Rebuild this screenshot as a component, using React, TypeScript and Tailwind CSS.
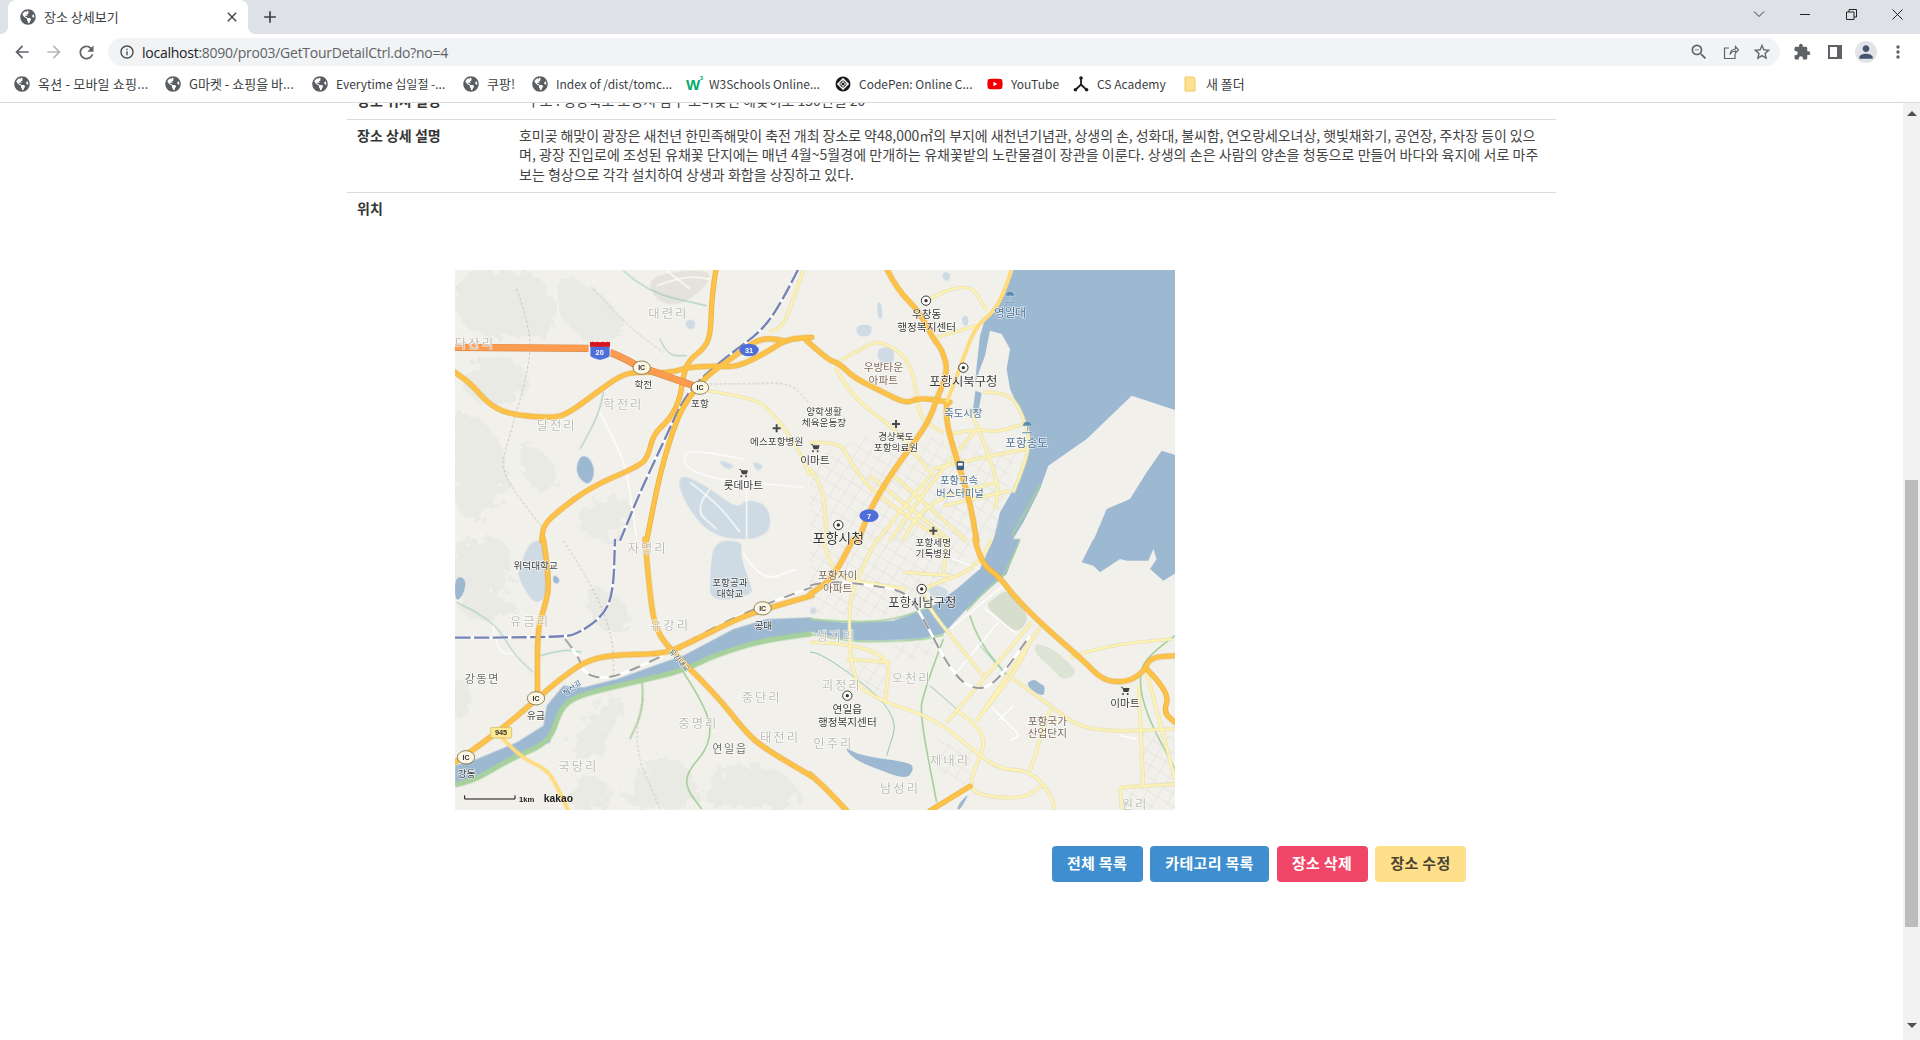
import { FaGlobeAmericas, FaYoutube } from 'react-icons/fa';
import {
  MdAdd,
  MdArrowBack,
  MdArrowForward,
  MdClose,
  MdExtension,
  MdInfoOutline,
  MdMoreVert,
  MdPerson,
  MdRefresh,
  MdStarBorder,
  MdZoomOut,
} from 'react-icons/md';

const KR = "font-['Noto_Sans_CJK_KR','Noto_Sans',sans-serif]";

// Map data is written in 3x pixels, one origin for each quarter of the map
const tiles = [
  [-15, -3],
  [1065, -3],
  [-15, 807],
  [1065, 807],
];
type Line = [number, string];
type Area = [number, string, string];

const move = (tile: number) => `translate(${tiles[tile][0]} ${tiles[tile][1]})`;
const parse = (pts: string) => pts.split(' ').map((p) => p.split(',').map(Number));

const curve = (pts: string) => {
  const p = parse(pts);
  let d = `M${p[0][0]} ${p[0][1]}`;
  for (let i = 1; i < p.length - 1; i++) {
    d += ` Q${p[i][0]} ${p[i][1]} ${(p[i][0] + p[i + 1][0]) / 2} ${(p[i][1] + p[i + 1][1]) / 2}`;
  }
  const last = p[p.length - 1];
  return `${d} L${last[0]} ${last[1]}`;
};

const blob = (pts: string) => {
  const p = parse(pts);
  const mid = (a: number[], b: number[]) => `${(a[0] + b[0]) / 2} ${(a[1] + b[1]) / 2}`;
  let d = `M${mid(p[p.length - 1], p[0])}`;
  p.forEach((pt, i) => {
    d += ` Q${pt[0]} ${pt[1]} ${mid(pt, p[(i + 1) % p.length])}`;
  });
  return `${d} Z`;
};

const campus = '#cfdbe4';
const water = '#9db9d2';
const park = '#d8decd';

const hills: Line[] = [
  [0, '0,20 120,0 250,0 320,90 300,210 180,200 40,200'],
  [0, '60,280 210,260 240,380 130,420 30,370'],
  [0, '0,420 110,450 190,600 130,730 30,760 0,600'],
  [0, '300,20 430,40 540,170 460,250 340,170'],
  [0, '200,500 300,560 330,640 230,680'],
  [0, '400,700 560,680 520,810 380,810'],
  [2, '0,0 180,0 190,100 130,190 0,180'],
  [2, '20,190 140,170 220,200 150,250 40,230'],
  [2, '400,140 510,170 550,240 500,290 430,260'],
  [2, '360,600 440,500 530,460 480,580 430,670 370,660'],
  [2, '500,810 560,710 630,640 730,690 750,810'],
  [2, '770,720 860,670 1000,690 1085,810 750,810'],
  [2, '0,420 70,430 60,520 0,540'],
  [2, '370,720 480,720 480,810 350,810'],
];

const softAreas: Area[] = [
  [0, '590,30 680,5 790,5 760,60 690,110 620,100', '#e4e2da'],
  [0, '680,610 770,650 860,720 890,690 960,710 960,810 790,810 700,700', campus],
  [0, '800,570 860,590 830,605', campus],
  [0, '905,575 945,590 920,610', campus],
  [0, '390,555 425,570 435,620 412,652 375,612', water],
  [0, '705,155 735,150 735,180 710,180', campus],
  [1, '200,100 215,100 218,150 205,150', campus],
  [1, '135,170 185,165 185,200 145,205', campus],
  [1, '200,235 255,235 250,290 205,280', campus],
  [1, '395,10 420,10 420,35 400,35', campus],
  [1, '455,140 475,140 475,170 458,170', campus],
  [2, '205,90 240,5 280,5 310,130 260,210 205,120', campus],
  [2, '15,110 50,120 40,170 15,190', water],
  [2, '310,105 330,120 325,135 308,130', water],
  [2, '790,5 880,5 870,50 900,130 910,170 780,190 780,110', campus],
  [3, '100,620 150,650 300,670 312,690 290,722 200,690 130,660', water],
  [3, '650,430 675,420 690,435 705,440 702,475 660,450', water],
  [3, '525,200 555,175 590,150 625,190 660,240 620,285 570,240', park],
  [3, '670,310 730,330 770,365 805,400 760,428 720,380 680,350', '#dde3d5'],
  [3, '350,130 420,150 405,180 360,175', campus],
  [3, '0,205 20,205 20,225 0,225', campus],
  [3, '450,790 480,760 450,813 440,810', water],
];

const seas: Area[] = [
  [1, '612,0 1100,0 1100,425 965,380 830,510 715,590 690,660 640,760 606,815 550,815 570,730 605,670 650,560 660,490 600,360 590,300 600,240 575,195 540,185 525,260 510,300 495,345 500,290 510,200 525,150 565,110 590,55', water],
  [1, '1055,545 1100,560 1100,815 850,815 890,720 960,690 1010,610', water],
  [1, '496,365 515,372 505,430 488,428', water],
  [3, '550,0 630,0 590,105 560,130 470,210 400,285 330,300 220,305 120,305 0,278 0,240 100,250 250,245 370,200 440,150 510,90', water],
  [3, '850,0 815,70 850,80 870,100 930,60 950,65 1015,65 1030,30 1040,60 1020,90 1060,125 1100,100 1100,0', water],
  [2, '1085,235 950,240 850,270 700,350 640,370 500,420 400,445 340,440 290,500 280,560 200,610 80,660 15,680 15,740 80,720 180,660 300,610 330,510 380,470 550,430 700,395 790,350 950,300 1085,278', water],
];

const greens: Line[] = [
  [2, '1085,285 950,300 790,350 700,395 550,430 380,470 330,510 300,610 180,660 80,720 15,738'],
  [3, '0,285 120,308 220,308 330,303 400,288'],
  [3, '630,0 590,105 540,140 470,215'],
  [3, '0,240 100,250 250,245 370,200'],
  [3, '480,230 500,300 600,420'],
  [3, '400,300 340,460 330,530 380,790'],
  [3, '1095,290 1010,350 985,420 1010,530 1095,690'],
  [2, '700,400 780,520 780,620 710,700 710,750 755,810'],
  [2, '575,420 585,500 540,600'],
  [1, '690,650 605,800'],
];

const streams: Line[] = [
  [0, '460,370 450,430 390,540'],
  [0, '630,210 650,260 710,260'],
  [0, '520,5 590,70 770,110'],
  [2, '20,190 130,240 190,345 250,400'],
  [2, '270,350 340,330 395,340'],
  [3, '0,340 30,335 270,520 230,650'],
  [3, '360,440 440,510'],
  [3, '510,320 600,420'],
];

const whites: Line[] = [
  [0, '880,570 730,540 700,560 710,600 800,630 890,640 1060,655'],
  [0, '890,640 890,810'],
  [0, '450,430 500,530 530,600 560,810'],
  [0, '620,50 700,20 780,30'],
  [0, '650,5 720,60'],
  [0, '720,640 800,700 870,790'],
  [0, '780,660 730,720 800,780'],
  [2, '130,260 140,340 190,345'],
  [2, '880,40 930,130 1040,90'],
  [2, '345,300 385,350 400,400'],
  [3, '520,205 620,285'],
  [3, '565,250 440,400'],
  [3, '580,140 420,270'],
  [3, '545,505 610,570 630,590 600,605'],
  [3, '610,500 565,545'],
  [3, '930,590 980,600'],
  [3, '430,60 510,90'],
];

const minors: Line[] = [
  [0, '770,365 900,385 960,420 1040,530 1080,620'],
  [0, '1060,5 1030,90 1000,170 960,190'],
  [1, '340,100 470,25 530,125'],
  [1, '380,205 500,170'],
  [1, '90,275 170,230 210,215 295,265 320,370 330,450 400,490'],
  [1, '75,295 120,380 250,475 320,560 370,620'],
  [1, '0,520 90,520 110,560 170,650 260,720 400,815'],
  [1, '0,600 40,650 50,810'],
  [1, '360,620 200,815'],
  [1, '420,495 500,480 560,490 640,465'],
  [1, '370,600 440,580 650,540'],
  [1, '520,370 600,365 650,465 660,540 610,670'],
  [1, '480,420 570,630 555,720'],
  [1, '500,480 370,630 240,815'],
  [1, '400,710 600,665'],
  [1, '240,610 330,690 470,815'],
  [1, '180,620 420,815'],
  [1, '280,815 330,700 560,640'],
  [3, '545,0 510,85 370,135 320,165 520,410'],
  [3, '665,250 410,550'],
  [3, '690,265 500,545'],
  [3, '660,290 655,345 500,545'],
  [3, '610,420 720,500 830,580 1095,570'],
  [3, '120,195 110,420 220,490 370,535 510,650 570,690 660,695 720,760 735,810'],
  [3, '120,195 130,140 200,0'],
  [3, '0,310 245,315 225,490'],
  [3, '110,360 240,370'],
  [3, '440,515 540,578 490,700 480,742 510,770 640,780 695,740'],
  [3, '720,510 660,695'],
  [3, '985,440 1000,740'],
  [3, '1010,400 1095,720'],
  [3, '930,745 1095,735'],
  [3, '930,745 935,810'],
  [3, '130,125 290,150'],
  [3, '280,100 420,110'],
  [3, '410,0 400,100'],
  [3, '40,0 60,90 130,130'],
  [3, '780,355 880,320 1085,300'],
];

const grays: Line[] = [
  [3, '0,140 50,125 200,140 290,160 330,220 430,410 500,455 560,430 660,290'],
  [2, '345,300 385,350 400,400 450,420 520,405 660,340 800,260 960,190 1085,145'],
];

const rails: Line[] = [
  [0, '1045,0 990,110 930,190 860,240 760,320 700,390 640,520 570,670 510,815'],
  [2, '15,296 340,296 390,280 460,230 490,160 495,0'],
];

const amber: Line[] = [
  [0, '15,310 60,340 110,400 170,435 310,448 360,430 440,370 510,320 560,308 660,312 710,295 800,290 860,295 950,250 1010,210 1085,205'],
  [0, '798,0 785,80 782,200 760,240 715,275 700,320 690,390 660,450 610,495 595,560 570,590 420,655 320,730 280,770 275,815'],
  [0, '1000,215 940,200 870,250 770,320 720,380 680,450 630,610 590,815'],
  [1, '-10,215 50,270 90,285 130,325 210,365 290,405 325,385 420,400'],
  [1, '230,0 260,60 330,130 370,210 395,240 415,305 380,390 355,460 290,550 240,620 180,720 145,815'],
  [1, '410,400 405,450 440,570 480,700 500,815'],
  [2, '280,0 300,130 285,200 262,270 262,460'],
  [2, '1085,170 960,205 860,240 700,320 640,345 480,347 400,370 330,420 260,480 180,550 80,625 15,670'],
  [2, '585,0 600,180 620,280 670,340 800,470 880,570 930,620 1085,712'],
  [3, '495,0 510,70 570,115 610,170 700,260 820,365 880,425 950,430 1000,400 1020,355 1095,350'],
  [3, '1010,390 1080,460 1060,520 1095,550'],
  [3, '130,0 100,60 60,125 0,165'],
  [3, '0,705 40,740 110,815'],
  [3, '360,815 480,742'],
];

const lightAmber: Line[] = [
  [1, '605,0 590,50 555,125 500,170 470,240 430,350 410,400'],
  [2, '150,590 210,655 290,690 320,740 355,815'],
];

const styles = {
  ghost: 'fill-[#bdbdb6] text-[37px] tracking-[6px]',
  dark: 'fill-[#3f3f3f] text-[29px]',
  large: 'fill-[#3a3a3a] text-[32px]',
  bold: 'fill-[#383838] text-[37px]',
  city: 'fill-[#333333] text-[42px]',
  village: 'fill-[#6f6f6a] text-[33px] tracking-[5px]',
  brown: 'fill-[#7d6a57] text-[32px]',
  blue: 'fill-[#4c7194] text-[31px]',
  sea: 'fill-[#4c7194] text-[35px]',
  navy: 'fill-[#3e6185] text-[22px]',
};

const labels: [number, number, number, string, keyof typeof styles, number?][] = [
  [0, 75, 222, '다산리', 'ghost'],
  [0, 655, 133, '대련리', 'ghost'],
  [0, 520, 405, '학전리', 'ghost'],
  [0, 320, 467, '달전리', 'ghost'],
  [0, 580, 345, '학전', 'dark'],
  [0, 750, 403, '포항', 'dark'],
  [0, 980, 515, '에스포항병원', 'dark'],
  [0, 880, 648, '롯데마트', 'large'],
  [1, 350, 133, '우창동', 'large'],
  [1, 350, 172, '행정복지센터', 'large'],
  [1, 220, 293, '우방타운', 'brown'],
  [1, 220, 331, '아파트', 'brown'],
  [1, 460, 335, '포항시북구청', 'bold'],
  [1, 460, 431, '죽도시장', 'blue'],
  [1, 42, 425, '양학생활', 'dark'],
  [1, 42, 460, '체육운동장', 'dark'],
  [1, 258, 500, '경상북도', 'dark'],
  [1, 258, 535, '포항의료원', 'dark'],
  [1, 15, 570, '이마트', 'large'],
  [1, 447, 632, '포항고속', 'blue'],
  [1, 450, 670, '버스터미널', 'blue'],
  [1, 650, 517, '포항송도', 'sea'],
  [1, 600, 128, '영일대', 'sea'],
  [1, 85, 805, '포항시청', 'city'],
  [2, 240, 245, '유금리', 'ghost'],
  [2, 593, 27, '자명리', 'ghost'],
  [2, 660, 257, '유강리', 'ghost'],
  [2, 97, 418, '강동면', 'village'],
  [2, 258, 527, '유금', 'dark'],
  [2, 257, 78, '위덕대학교', 'dark'],
  [2, 840, 128, '포항공과', 'dark'],
  [2, 840, 162, '대학교', 'dark'],
  [2, 940, 258, '공대', 'dark'],
  [2, 935, 473, '중단리', 'ghost'],
  [2, 745, 553, '중명리', 'ghost'],
  [2, 990, 595, '태전리', 'ghost'],
  [2, 840, 628, '연일읍', 'village'],
  [2, 385, 680, '국당리', 'ghost'],
  [2, 50, 703, '강동', 'dark'],
  [2, 365, 445, '형산강', 'navy', -38],
  [2, 690, 362, '유강대교', 'navy', 48],
  [3, 370, 10, '포항세명', 'dark'],
  [3, 370, 42, '기독병원', 'dark'],
  [3, 83, 107, '포항자이', 'brown'],
  [3, 83, 145, '아파트', 'brown'],
  [3, 337, 188, '포항시남구청', 'bold'],
  [3, 78, 292, '생지리', 'ghost'],
  [3, 305, 418, '오천리', 'ghost'],
  [3, 95, 437, '괴정리', 'ghost'],
  [3, 112, 510, '연일읍', 'large'],
  [3, 112, 548, '행정복지센터', 'large'],
  [3, 70, 613, '인주리', 'ghost'],
  [3, 420, 663, '제내리', 'ghost'],
  [3, 270, 748, '남성리', 'ghost'],
  [3, 712, 546, '포항국가', 'brown'],
  [3, 712, 580, '산업단지', 'brown'],
  [3, 945, 490, '이마트', 'large'],
  [3, 975, 795, '원리', 'ghost'],
];

const Target = ({ t, x, y }: { t: number; x: number; y: number }) => (
  <g transform={move(t)}>
    <circle cx={x} cy={y} r={14} fill="#fff" stroke="#333" strokeWidth={3} />
    <circle cx={x} cy={y} r={5} fill="#333" />
  </g>
);

const Cross = ({ t, x, y }: { t: number; x: number; y: number }) => (
  <path transform={move(t)} d={`M${x - 12} ${y}h24M${x} ${y - 12}v24`} stroke="#4a4a4a" strokeWidth={6} />
);

const Cart = ({ t, x, y }: { t: number; x: number; y: number }) => (
  <g transform={`${move(t)} translate(${x} ${y})`} fill="#444">
    <path d="M-14 -12h6l3 4h19l-4 12h-14l-4-12z" />
    <circle cx={-6} cy={10} r={3} />
    <circle cx={8} cy={10} r={3} />
  </g>
);

const Ic = ({ t, x, y }: { t: number; x: number; y: number }) => (
  <g transform={move(t)}>
    <ellipse cx={x} cy={y} rx={26} ry={20} fill="#fbf7e4" stroke="#7c6c42" strokeWidth={2.5} />
    <text x={x} y={y + 1} textAnchor="middle" dominantBaseline="central" className="fill-[#333333] text-[21px] font-bold font-['Liberation_Sans',sans-serif]">
      IC
    </text>
  </g>
);

const Oval = ({ t, x, y, n, rx }: { t: number; x: number; y: number; n: string; rx: number }) => (
  <g transform={move(t)}>
    <ellipse cx={x} cy={y} rx={rx} ry={19} fill="#4f6fd8" />
    <text x={x} y={y + 1} textAnchor="middle" dominantBaseline="central" className="fill-white text-[22px] font-bold font-['Liberation_Sans',sans-serif]">
      {n}
    </text>
  </g>
);

const Beach = ({ x, y }: { x: number; y: number }) => (
  <g transform={`${move(1)} translate(${x} ${y})`} fill="#5f8bae" stroke="#fff" strokeWidth={1}>
    <path d="M-14 -4a14 14 0 0 1 28 0z" />
    <path d="M-1 -4h3v16h-3z" />
    <path d="M-16 14h32v4h-32z" />
  </g>
);

const KakaoMap = () => (
  <svg viewBox="0 0 2160 1620" className={`block h-[540px] w-[720px] bg-[#f2f0eb] ${KR}`}>
    <defs>
      <pattern id="blocks" width="34" height="34" patternUnits="userSpaceOnUse" patternTransform="rotate(32)">
        <path d="M0 0H34M0 0V34" stroke="#d9d7cf" strokeWidth="2.5" fill="none" />
      </pattern>
      <filter id="rough" x="-10%" y="-10%" width="120%" height="120%">
        <feTurbulence type="fractalNoise" baseFrequency="0.035" numOctaves="3" seed="4" />
        <feDisplacementMap in="SourceGraphic" scale="70" />
      </filter>
    </defs>

    <g filter="url(#rough)" fill="#e9eae4">
      {hills.map(([t, pts], i) => (
        <path key={i} transform={move(t)} d={blob(pts)} />
      ))}
    </g>
    {softAreas.map(([t, pts, fill], i) => (
      <path key={i} transform={move(t)} d={blob(pts)} fill={fill} />
    ))}
    {seas.map(([t, pts, fill], i) => (
      <polygon key={i} transform={move(t)} points={pts} fill={fill} />
    ))}
    {greens.map(([t, pts], i) => (
      <path key={i} transform={move(t)} d={curve(pts)} fill="none" stroke="#a6d19d" strokeWidth={i < 1 ? 16 : 5} />
    ))}
    {streams.map(([t, pts], i) => (
      <path key={i} transform={move(t)} d={curve(pts)} fill="none" stroke="#93c6b4" strokeWidth={3} />
    ))}

    {/* city blocks */}
    <polygon transform={move(1)} points="0,570 240,470 370,510 620,540 560,800 300,815 0,815" fill="url(#blocks)" />
    <polygon transform={move(3)} points="0,0 500,0 400,170 250,240 0,220" fill="url(#blocks)" />
    <polygon transform={move(3)} points="110,370 240,370 225,490 110,420" fill="url(#blocks)" />
    <polygon transform={move(3)} points="250,320 400,300 370,360 250,360" fill="url(#blocks)" />
    <polygon transform={move(3)} points="385,600 490,640 470,740 380,700" fill="url(#blocks)" />
    <polygon transform={move(3)} points="990,560 1095,600 1095,810 930,810 930,745 985,740" fill="url(#blocks)" />

    {whites.map(([t, pts], i) => (
      <path key={i} transform={move(t)} d={curve(pts)} fill="none" stroke="#ffffff" strokeWidth={4} />
    ))}
    {minors.map(([t, pts], i) => (
      <path key={i} transform={move(t)} d={curve(pts)} fill="none" stroke="#e4dcae" strokeWidth={10} />
    ))}
    {minors.map(([t, pts], i) => (
      <path key={i} transform={move(t)} d={curve(pts)} fill="none" stroke="#fdf3b4" strokeWidth={7} />
    ))}

    {/* boundaries */}
    <path transform={move(0)} d={curve('200,60 240,170 240,290 170,530 150,610 280,780')} fill="none" stroke="#bdb7a6" strokeWidth={2.5} strokeDasharray="7 7" />
    <path transform={move(0)} d={curve('430,60 530,170 640,250')} fill="none" stroke="#bdb7a6" strokeWidth={2.5} strokeDasharray="7 7" />
    <path transform={move(0)} d={curve('780,345 900,345 1020,340 1075,400')} fill="none" stroke="#bdb7a6" strokeWidth={2.5} strokeDasharray="7 7" />
    <path transform={move(2)} d={curve('340,5 430,140 490,300 490,410')} fill="none" stroke="#bdb7a6" strokeWidth={2.5} strokeDasharray="7 7" />
    <path transform={move(2)} d={curve('580,480 540,600 630,810')} fill="none" stroke="#bdb7a6" strokeWidth={2.5} strokeDasharray="7 7" />

    {grays.map(([t, pts], i) => (
      <g key={i} transform={move(t)} fill="none">
        <path d={curve(pts)} stroke="#ffffff" strokeWidth={8} />
        <path d={curve(pts)} stroke="#9a9a9a" strokeWidth={6} strokeDasharray="34 30" />
      </g>
    ))}
    {rails.map(([t, pts], i) => (
      <g key={i} transform={move(t)} fill="none">
        <path d={curve(pts)} stroke="#ffffff" strokeWidth={9} />
        <path d={curve(pts)} stroke="#7482b5" strokeWidth={7} strokeDasharray="46 10" />
      </g>
    ))}

    {amber.map(([t, pts], i) => (
      <path key={i} transform={move(t)} d={curve(pts)} fill="none" stroke="#e7ae45" strokeWidth={16} strokeLinecap="round" />
    ))}
    {amber.map(([t, pts], i) => (
      <path key={i} transform={move(t)} d={curve(pts)} fill="none" stroke="#fdc246" strokeWidth={12} strokeLinecap="round" />
    ))}
    {lightAmber.map(([t, pts], i) => (
      <path key={i} transform={move(t)} d={curve(pts)} fill="none" stroke="#fedc7e" strokeWidth={12} />
    ))}

    {/* expressway */}
    <g transform={move(0)} fill="none">
      <path d="M15 235L415 238M480 250Q530 270 560 290L730 350" stroke="#d88a48" strokeWidth={22} />
      <path d="M15 235L415 238M480 250Q530 270 560 290L730 350" stroke="#fd9c50" strokeWidth={18} />
    </g>

    {labels.map(([t, x, y, text, style, angle], i) => (
      <text
        key={i}
        transform={angle ? `${move(t)} rotate(${angle} ${x} ${y})` : move(t)}
        x={x}
        y={y}
        textAnchor="middle"
        dominantBaseline="central"
        stroke="#ffffff"
        strokeOpacity={0.75}
        strokeWidth={4}
        className={`[paint-order:stroke] ${styles[style]}`}
      >
        {text}
      </text>
    ))}

    <Target t={1} x={348} y={95} />
    <Target t={1} x={460} y={296} />
    <Target t={1} x={85} y={768} />
    <Target t={3} x={335} y={150} />
    <Target t={3} x={112} y={470} />
    <Cross t={0} x={980} y={478} />
    <Cross t={1} x={258} y={465} />
    <Cross t={1} x={370} y={785} />
    <Cart t={0} x={880} y={612} />
    <Cart t={1} x={15} y={537} />
    <Cart t={3} x={945} y={455} />
    <Beach x={600} y={85} />
    <Beach x={652} y={475} />
    <Ic t={0} x={575} y={296} />
    <Ic t={0} x={750} y={356} />
    <Ic t={2} x={258} y={478} />
    <Ic t={2} x={938} y={208} />
    <Ic t={2} x={48} y={655} />
    <Oval t={0} x={897} y={243} n="31" rx={29} />
    <Oval t={1} x={177} y={740} n="7" rx={29} />

    {/* route 20 shield */}
    <g transform={move(0)}>
      <path d="M420 232q30-6 60 0v30q-8 8-30 12q-22-4-30-12z" fill="#4f6fd8" stroke="#fff" strokeWidth={2} />
      <path d="M420 220q8-4 15 0q8-4 15 0q8-4 15 0q8-4 15 0v13h-60z" fill="#d8141c" />
      <text x={449} y={250} textAnchor="middle" dominantBaseline="central" className="fill-white text-[22px] font-bold font-['Liberation_Sans',sans-serif]">
        20
      </text>
    </g>

    {/* bus stop */}
    <g transform={move(1)}>
      <rect x={440} y={577} width={22} height={26} rx={3} fill="#3d5f84" />
      <rect x={444} y={582} width={14} height={8} fill="#fff" />
    </g>

    {/* route 945 */}
    <g transform={move(2)}>
      <rect x={122} y={565} width={63} height={32} rx={3} fill="#fde98f" stroke="#c9b45f" strokeWidth={2} />
      <text x={153} y={581} textAnchor="middle" dominantBaseline="central" className="fill-[#333333] text-[22px] font-bold font-['Liberation_Sans',sans-serif]">
        945
      </text>
    </g>

    {/* scale and logo */}
    <g transform={move(2)}>
      <path d="M44 769v11h151v-11" fill="none" stroke="#111" strokeWidth={3} />
      <text x={207} y={782} dominantBaseline="central" className="fill-[#222222] text-[23px] font-bold font-['Liberation_Sans',sans-serif]">
        1km
      </text>
      <text x={281} y={777} dominantBaseline="central" className="fill-[#222222] text-[31px] font-bold font-['Liberation_Sans',sans-serif]">
        kakao
      </text>
    </g>
  </svg>
);

const Globe = () => <FaGlobeAmericas className="h-4 w-4 shrink-0 text-[#5a5e63]" />;

const W3Icon = () => (
  <span className="relative flex h-4 w-4 shrink-0 items-center justify-center font-['Liberation_Sans',sans-serif] text-[15px] font-bold leading-none text-[#04aa6d]">
    W<span className="absolute -right-[2px] -top-[1px] text-[6px]">3</span>
  </span>
);

const PenIcon = () => (
  <svg viewBox="0 0 16 16" className="h-4 w-4 shrink-0">
    <circle cx="8" cy="8" r="7.5" fill="#1b1b1b" />
    <path d="M8 2.8L13.2 8L8 13.2L2.8 8Z" fill="none" stroke="#fff" strokeWidth="1.3" />
    <path d="M8 2.8V5.8M8 10.2V13.2M2.8 8H5.6M10.4 8H13.2M5.6 8L8 5.8L10.4 8L8 10.2Z" fill="none" stroke="#fff" strokeWidth="1" />
  </svg>
);

const CsIcon = () => (
  <svg viewBox="0 0 16 16" className="h-4 w-4 shrink-0" fill="#1c1c1c">
    <path d="M8 2V8.5L2.8 13.5M8 8.5L13.2 13.5" fill="none" stroke="#1c1c1c" strokeWidth="1.8" />
    <circle cx="8" cy="2" r="1.8" />
    <circle cx="2.4" cy="13.8" r="1.8" />
    <circle cx="13.6" cy="13.8" r="1.8" />
  </svg>
);

const FolderIcon = () => (
  <svg viewBox="0 0 16 16" className="h-4 w-4 shrink-0">
    <path d="M3 1H11.5L13 3V15H3Z" fill="#fde293" stroke="#f2ca5e" strokeWidth="1" />
  </svg>
);

const bookmarks = [
  { w: 'w-[151px] text-[13px] tracking-[0.2px]', icon: <Globe />, text: '옥션 - 모바일 쇼핑...' },
  { w: 'w-[147px] text-[13px]', icon: <Globe />, text: 'G마켓 - 쇼핑을 바...' },
  { w: 'w-[151px] text-[12px]', icon: <Globe />, text: 'Everytime 십일절 -...' },
  { w: 'w-[69px] text-[13px]', icon: <Globe />, text: '쿠팡!' },
  { w: 'w-[153px] text-[12px]', icon: <Globe />, text: 'Index of /dist/tomc...' },
  { w: 'w-[150px] text-[12px]', icon: <W3Icon />, text: 'W3Schools Online...' },
  { w: 'w-[152px] text-[12px]', icon: <PenIcon />, text: 'CodePen: Online C...' },
  { w: 'w-[86px] text-[12px]', icon: <FaYoutube className="h-4 w-4 shrink-0 text-[#f00000]" />, text: 'YouTube' },
  { w: 'w-[109px] text-[12px]', icon: <CsIcon />, text: 'CS Academy' },
  { w: 'w-[80px] text-[13px]', icon: <FolderIcon />, text: '새 폴더' },
];

const BrowserChrome = () => (
  <header className={`h-[103px] shrink-0 border-b border-[#d9dadc] bg-white ${KR}`}>
    {/* tab strip */}
    <div className="flex h-[34px] bg-[#dee1e6] pl-2">
      <div className="relative flex h-[34px] w-[240px] items-center rounded-t-lg bg-white pl-[12px] pr-[8px]">
        <span className="absolute -left-2 bottom-0 h-2 w-2 bg-[radial-gradient(circle_at_0_0,transparent_8px,#ffffff_8.5px)]" />
        <span className="absolute -right-2 bottom-0 h-2 w-2 bg-[radial-gradient(circle_at_100%_0,transparent_8px,#ffffff_8.5px)]" />
        <Globe />
        <span className="ml-[8px] flex-1 text-[13px] text-[#3c4043]">장소 상세보기</span>
        <MdClose className="h-4 w-4 text-[#3c4043]" />
      </div>
      <MdAdd className="ml-[12px] mt-[7px] h-5 w-5 text-[#3c4043]" />
      <div className="ml-auto flex">
        <div className="flex w-[46px] justify-center pt-[10px]">
          <svg viewBox="0 0 12 8" className="h-2 w-3" fill="none" stroke="#333" strokeWidth="1"><path d="M1 1.5L6 6.5L11 1.5" /></svg>
        </div>
        <div className="flex w-[46px] justify-center pt-[14px]">
          <span className="h-px w-[10px] bg-[#222222]" />
        </div>
        <div className="flex w-[46px] justify-center pt-[9px]">
          <svg viewBox="0 0 11 11" className="h-[11px] w-[11px]" fill="none" stroke="#222" strokeWidth="1"><path d="M.5 3h7.500v7.500h-7.500zM3 3V.5h7.500V8H8" /></svg>
        </div>
        <div className="flex w-[46px] justify-center pt-[9px]">
          <svg viewBox="0 0 11 11" className="h-[11px] w-[11px]" fill="none" stroke="#222" strokeWidth="1"><path d="M.5.5l10 10M10.500.5l-10 10" /></svg>
        </div>
      </div>
    </div>

    {/* toolbar */}
    <div className="flex h-[36px] items-center pl-[12px] text-[#5f6368]">
      <MdArrowBack className="h-5 w-5" />
      <MdArrowForward className="ml-[12px] h-5 w-5 text-[#b4b6b9]" />
      <MdRefresh className="ml-[12px] h-[21px] w-[21px]" />
      <div className="ml-[11px] flex h-[28px] w-[1672px] items-center rounded-full bg-[#f1f3f4] pl-[11px] pr-[8px]">
        <MdInfoOutline className="h-4 w-4 text-[#44474a]" />
        <span className="ml-[7px] flex-1 font-['Open_Sans',sans-serif] text-[14px] tracking-[-0.25px] text-[#5f6368]">
          <span className="text-[#202124]">localhost</span>:8090/pro03/GetTourDetailCtrl.do?no=4
        </span>
        <MdZoomOut className="h-5 w-5" />
        <svg viewBox="0 0 16 16" className="ml-[14px] h-4 w-4" fill="none" stroke="#5f6368" strokeWidth="1.200">
          <path d="M6 4H1.500V14.500H12V10M7 10.500C7.500 7 9.500 5 12.500 5V2.500L15.500 6L12.500 9V7C10 7 8 8.500 7 10.500Z" />
        </svg>
        <MdStarBorder className="ml-[13px] h-5 w-5" />
      </div>
      <MdExtension className="ml-[13px] h-[18px] w-[18px]" />
      <svg viewBox="0 0 14 14" className="ml-[17px] h-[14px] w-[14px]">
        <path d="M0 0H14V14H0ZM2 2V12H9V2Z" fill="#5f6368" fillRule="evenodd" />
      </svg>
      <span className="ml-[13px] flex h-[22px] w-[22px] items-center justify-center rounded-full bg-[#e1e3e6]">
        <MdPerson className="h-5 w-5 text-[#475470]" />
      </span>
      <MdMoreVert className="ml-[11px] h-5 w-5" />
    </div>

    {/* bookmarks */}
    <div className="flex h-[28px] items-center pl-[14px]">
      {bookmarks.map((b) => (
        <div key={b.text} className={`flex items-center gap-[8px] ${b.w}`}>
          {b.icon}
          <span className="whitespace-nowrap text-[#3c4043]">{b.text}</span>
        </div>
      ))}
    </div>
  </header>
);

const Scrollbar = () => (
  <aside className="flex w-[17px] shrink-0 flex-col items-center bg-[#f1f1f1]">
    <span className="mt-[8px] h-0 w-0 border-x-[5px] border-b-[5px] border-x-transparent border-b-[#505050]" />
    <span className="mt-[364px] h-[447px] w-[13px] bg-[#bcbcbc]" />
    <span className="mt-[96px] h-0 w-0 border-x-[5px] border-t-[5px] border-x-transparent border-t-[#505050]" />
  </aside>
);

const rows = [
  {
    label: '장소 위치 설명',
    pad: 'pt-[7px] pb-[8px]',
    body: [{ text: '- 주소 : 경상북도 포항시 남구 호미곶면 해맞이로 150번길 20', track: 'tracking-[0px]' }],
  },
  {
    label: '장소 상세 설명',
    pad: 'pt-[6px] pb-[8px]',
    body: [
      {
        text: '호미곶 해맞이 광장은 새천년 한민족해맞이 축전 개최 장소로 약48,000㎡의 부지에 새천년기념관, 상생의 손, 성화대, 불씨함, 연오랑세오녀상, 햇빛채화기, 공연장, 주차장 등이 있으',
        track: 'tracking-[-0.06px]',
      },
      {
        text: '며, 광장 진입로에 조성된 유채꽃 단지에는 매년 4월~5월경에 만개하는 유채꽃밭의 노란물결이 장관을 이룬다. 상생의 손은 사람의 양손을 청동으로 만들어 바다와 육지에 서로 마주',
        track: 'tracking-[0.05px]',
      },
      { text: '보는 형상으로 각각 설치하여 상생과 화합을 상징하고 있다.', track: 'tracking-[0px]' },
    ],
  },
];

const buttons = [
  { text: '전체 목록', cls: 'w-[91px] bg-[#3e8ed0] text-white' },
  { text: '카테고리 목록', cls: 'w-[119px] bg-[#3e8ed0] text-white' },
  { text: '장소 삭제', cls: 'w-[91px] bg-[#f14668] text-white' },
  { text: '장소 수정', cls: 'w-[91px] bg-[#ffe08a] text-[#4c4533]' },
];

export default function App() {
  return (
    <div className={`flex h-[1040px] w-[1920px] flex-col overflow-hidden bg-white ${KR}`}>
      <BrowserChrome />
      <div className="flex min-h-0 flex-1">
        <main className="min-w-0 flex-1 overflow-hidden">
          <div className="mx-auto -mt-[19px] w-[1209px] text-[14px] leading-[19.6px] text-[#363636]">
            {rows.map((row) => (
              <div key={row.label} className="flex border-b border-[#dbdbdb]">
                <div className={`w-[172px] shrink-0 pl-[10px] font-bold ${row.pad}`}>{row.label}</div>
                <div className={`text-[#444444] ${row.pad}`}>
                  {row.body.map((line) => (
                    <div key={line.text} className={`whitespace-nowrap ${line.track}`}>{line.text}</div>
                  ))}
                </div>
              </div>
            ))}
            <div className="pb-[7px] pl-[10px] pt-[6px] font-bold">위치</div>
            <div className="ml-[108px] mt-[44px]">
              <KakaoMap />
            </div>
            <div className="mt-[36px] flex justify-end gap-[7.5px] pr-[90px]">
              {buttons.map((b) => (
                <button key={b.text} className={`h-[36px] rounded-[4px] pb-[2px] text-center text-[15px] font-bold tracking-[0.3px] ${b.cls}`}>
                  {b.text}
                </button>
              ))}
            </div>
          </div>
        </main>
        <Scrollbar />
      </div>
    </div>
  );
}
